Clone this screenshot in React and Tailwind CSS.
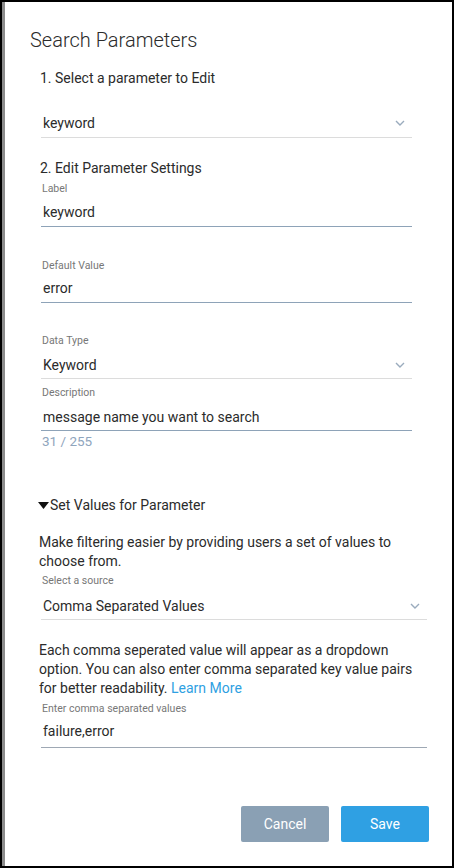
import React from 'react';

const Chevron = () => (
  <svg width="10" height="6" viewBox="0 0 10 6" className="shrink-0">
    <polyline points="1,1 5,5 9,1" fill="none" stroke="#9aabbd" strokeWidth="1.4" />
  </svg>
);

const FieldLabel = ({ children, className = '' }) => (
  <div className={`pl-[1px] text-[10.5px] leading-[14px] text-[#777] ${className}`}>{children}</div>
);

const SelectField = ({ value, className = '', pb = 'pb-[4px]' }) => (
  <div className={`flex items-center justify-between border-b border-[#dcdcdc] pl-[2px] pr-[7px] text-[14px] leading-[20px] text-[#2b2b2b] ${pb} ${className}`}>
    <span>{value}</span>
    <Chevron />
  </div>
);

const InputField = ({ value, className = '', pb = 'pb-[4px]', line = 'border-[#8ea3b8]' }) => (
  <div className={`border-b pl-[2px] text-[14px] leading-[20px] text-[#2b2b2b] ${line} ${pb} ${className}`}>
    {value}
  </div>
);

export default function App() {
  return (
    <div className="bg-black p-[2px]" style={{ fontFamily: 'Roboto, "Noto Sans", sans-serif' }}>
      <div className="flex h-[864px] flex-col border-l-[3px] border-[#8c8c8c] bg-white">
        <h1 className="ml-[25px] mt-[26px] text-[20px] font-light leading-[24px] text-[#2b2b2b]">
          Search Parameters
        </h1>

        <div className="pl-[36px]">
          <div className="w-[371px]">
            <div className="-ml-[1px] mt-[16px] text-[14px] leading-[20px] text-[#2b2b2b]">
              1. Select a parameter to Edit
            </div>
            <SelectField value="keyword" className="mt-[25px]" />

            <div className="-ml-[1px] mt-[20px] text-[14px] leading-[20px] text-[#2b2b2b]">
              2. Edit Parameter Settings
            </div>
            <FieldLabel className="mt-[4px]">Label</FieldLabel>
            <InputField value="keyword" className="mt-[6px]" />

            <FieldLabel className="mt-[32px]">Default Value</FieldLabel>
            <InputField value="error" className="mt-[5px]" />

            <FieldLabel className="mt-[31px]">Data Type</FieldLabel>
            <SelectField value="Keyword" className="mt-[7px]" pb="pb-[3px]" />

            <FieldLabel className="mt-[7px]">Description</FieldLabel>
            <InputField value="message name you want to search" className="mt-[7px]" pb="pb-[3px]" />
            <div className="mt-[1px] pl-[1px] text-[13.5px] leading-[18px] text-[#8fa5bd]">31 / 255</div>
          </div>

          <div className="w-[386px]">
            <div className="-ml-[3px] mt-[45px] flex items-center text-[14px] leading-[20px] text-[#2b2b2b]">
              <svg width="11" height="7" viewBox="0 0 11 7" className="mr-[1px]">
                <polygon points="0,0 11,0 5.5,7" fill="#111" />
              </svg>
              Set Values for Parameter
            </div>

            <p className="-ml-[2px] mt-[18px] text-[14px] leading-[19px] text-[#2b2b2b]">
              Make filtering easier by providing users a set of values to choose from.
            </p>
            <FieldLabel className="mt-[3px]">Select a source</FieldLabel>
            <SelectField value="Comma Separated Values" className="mt-[8px]" pb="pb-[3px]" />

            <p className="-ml-[2px] mt-[21px] text-[14px] leading-[19px] text-[#2b2b2b]">
              Each comma seperated value will appear as a dropdown option. You can also enter comma separated key value pairs for better readability. <span className="text-[#2f9fe2]">Learn More</span>
            </p>
            <FieldLabel className="mt-[4px]">Enter comma separated values</FieldLabel>
            <InputField value="failure,error" className="mt-[5px]" pb="pb-[6px]" line="border-[#9ea8b4]" />
          </div>
        </div>

        <div className="mt-auto mr-[23px] mb-[24px] flex justify-end gap-[12px]">
          <button className="h-[36px] w-[88px] rounded-[2px] bg-[#8aa0b4] text-[14px] text-white">Cancel</button>
          <button className="h-[36px] w-[88px] rounded-[2px] bg-[#2fa0e3] text-[14px] text-white">Save</button>
        </div>
      </div>
    </div>
  );
}
